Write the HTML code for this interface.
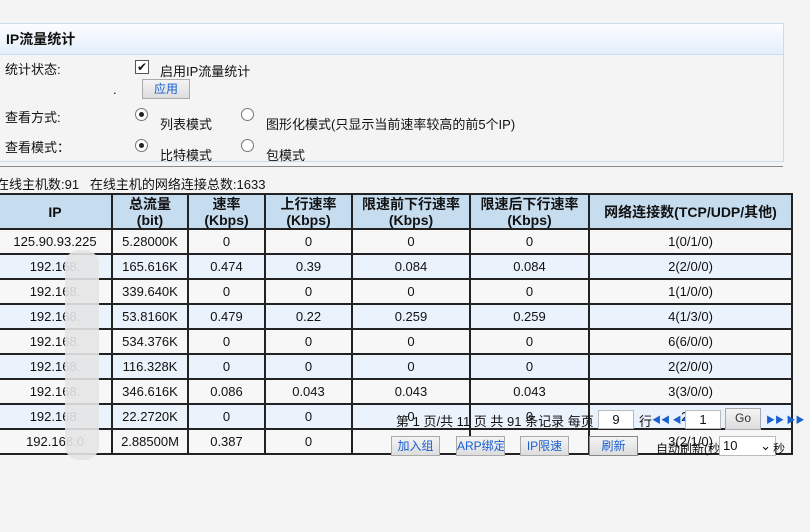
<!DOCTYPE html>
<html><head><meta charset="utf-8"><style>
body{margin:0;width:810px;height:532px;background:#f4f4f4;font-family:"Liberation Sans","Noto Sans CJK SC",sans-serif;font-size:13px;color:#111;position:relative;overflow:hidden}
.a{position:absolute;white-space:nowrap}
.panel{position:absolute;left:-1px;top:23px;width:783px;height:137px;border:1px solid #c9dcee;background:#f4f4f4}
.ph{height:30px;background:linear-gradient(#fbfdff,#e3eefa);border-bottom:1px solid #c9dcee;font-weight:bold;font-size:14px;line-height:30px;padding-left:6px}
table{position:absolute;left:-3px;top:193px;border-collapse:collapse;font-size:13px}
td,th{border:2px solid #222;text-align:center;padding:0;box-sizing:border-box}
tr{height:25px}
tr.h{height:35px}
th{background:#c6dcef;font-weight:bold;line-height:16px;font-size:14px}
tr.b td{background:#eaf2fb}
tr.w td{background:#f7f7f7}
.btn{position:absolute;height:18px;border:1px solid #aaa;background:linear-gradient(#f4f4f4,#ddd);color:#1a5fd0;font-size:12px;text-align:center;line-height:18px;white-space:nowrap;overflow:hidden}
.radio{position:absolute;width:11px;height:11px;border:1px solid #777;border-radius:50%;background:#fff}
.radio.on::after{content:"";position:absolute;left:3px;top:3px;width:5px;height:5px;border-radius:50%;background:#222}
.inp{position:absolute;height:17px;background:#fff;border:1px solid #bbb;text-align:center;line-height:17px;font-size:13px;white-space:nowrap}
</style></head><body>
<div class="panel"><div class="ph">IP流量统计</div></div>
<div class="a" style="left:5px;top:59px">统计状态:</div>
<div class="a" style="left:135px;top:60px;width:12px;height:12px;border:1px solid #555;background:#fff;font-size:12px;line-height:12px;text-align:center">✔</div>
<div class="a" style="left:160px;top:61px">启用IP流量统计</div>
<div class="a" style="left:113px;top:82px">.</div>
<div class="btn" style="left:142px;top:79px;width:46px">应用</div>
<div class="a" style="left:5px;top:107px">查看方式:</div>
<div class="radio on" style="left:135px;top:108px"></div>
<div class="a" style="left:160px;top:114px">列表模式</div>
<div class="radio" style="left:241px;top:108px"></div>
<div class="a" style="left:266px;top:114px">图形化模式(只显示当前速率较高的前5个IP)</div>
<div class="a" style="left:5px;top:137px">查看模式：</div>
<div class="radio on" style="left:135px;top:139px"></div>
<div class="a" style="left:160px;top:145px">比特模式</div>
<div class="radio" style="left:241px;top:139px"></div>
<div class="a" style="left:266px;top:145px">包模式</div>
<div class="a" style="left:0;top:166px;width:783px;height:1px;background:#888"></div>
<div class="a" style="left:-4px;top:174px">在线主机数:91 &nbsp;&nbsp;在线主机的网络连接总数:1633</div>
<table>
<tr class="h"><th style="width:114px">IP</th><th style="width:76px">总流量<br>(bit)</th><th style="width:77px">速率<br>(Kbps)</th><th style="width:87px">上行速率<br>(Kbps)</th><th style="width:118px">限速前下行速率<br>(Kbps)</th><th style="width:119px">限速后下行速率<br>(Kbps)</th><th style="width:203px">网络连接数(TCP/UDP/其他)</th></tr>
<tr class="w"><td>125.90.93.225</td><td>5.28000K</td><td>0</td><td>0</td><td>0</td><td>0</td><td>1(0/1/0)</td></tr>
<tr class="b"><td>192.168.</td><td>165.616K</td><td>0.474</td><td>0.39</td><td>0.084</td><td>0.084</td><td>2(2/0/0)</td></tr>
<tr class="w"><td>192.168.</td><td>339.640K</td><td>0</td><td>0</td><td>0</td><td>0</td><td>1(1/0/0)</td></tr>
<tr class="b"><td>192.168.</td><td>53.8160K</td><td>0.479</td><td>0.22</td><td>0.259</td><td>0.259</td><td>4(1/3/0)</td></tr>
<tr class="w"><td>192.168.</td><td>534.376K</td><td>0</td><td>0</td><td>0</td><td>0</td><td>6(6/0/0)</td></tr>
<tr class="b"><td>192.168.</td><td>116.328K</td><td>0</td><td>0</td><td>0</td><td>0</td><td>2(2/0/0)</td></tr>
<tr class="w"><td>192.168.</td><td>346.616K</td><td>0.086</td><td>0.043</td><td>0.043</td><td>0.043</td><td>3(3/0/0)</td></tr>
<tr class="b"><td>192.168.</td><td>22.2720K</td><td>0</td><td>0</td><td>0</td><td>0</td><td>2(1</td></tr>
<tr class="w"><td>192.168.0</td><td>2.88500M</td><td>0.387</td><td>0</td><td>0</td><td>0</td><td>3(2/1/0)</td></tr>
</table>
<div class="a" style="left:65px;top:250px;width:34px;height:210px;background:#e4e4e6;border-radius:14px;opacity:.9"></div>
<div class="a" style="left:396px;top:411px">第 1 页/共 11 页 共 91 条记录 每页</div>
<div class="inp" style="left:598px;top:410px;width:34px">9</div>
<div class="a" style="left:639px;top:411px">行</div>
<div class="a" style="left:652px;top:413px;color:#1a5fd0;font-size:9px">◀◀ ◀◀</div>
<div class="inp" style="left:685px;top:410px;width:34px">1</div>
<div class="btn" style="left:725px;top:408px;width:34px;height:20px;color:#333">Go</div>
<div class="a" style="left:766px;top:413px;color:#1a5fd0;font-size:9px">▶▶ ▶▶</div>
<div class="btn" style="left:391px;top:436px;width:47px">加入组</div>
<div class="btn" style="left:456px;top:436px;width:47px">ARP绑定</div>
<div class="btn" style="left:520px;top:436px;width:47px">IP限速</div>
<div class="btn" style="left:589px;top:436px;width:47px;border-color:#888">刷新</div>
<div class="a" style="left:656px;top:440px;font-size:12px">自动刷新(秒):</div>
<div class="inp" style="left:719px;top:436px;width:52px;text-align:left;padding-left:3px;height:18px">10 <span style="position:absolute;right:4px">⌄</span></div>
<div class="a" style="left:773px;top:440px;font-size:12px">秒</div>
</body></html>
